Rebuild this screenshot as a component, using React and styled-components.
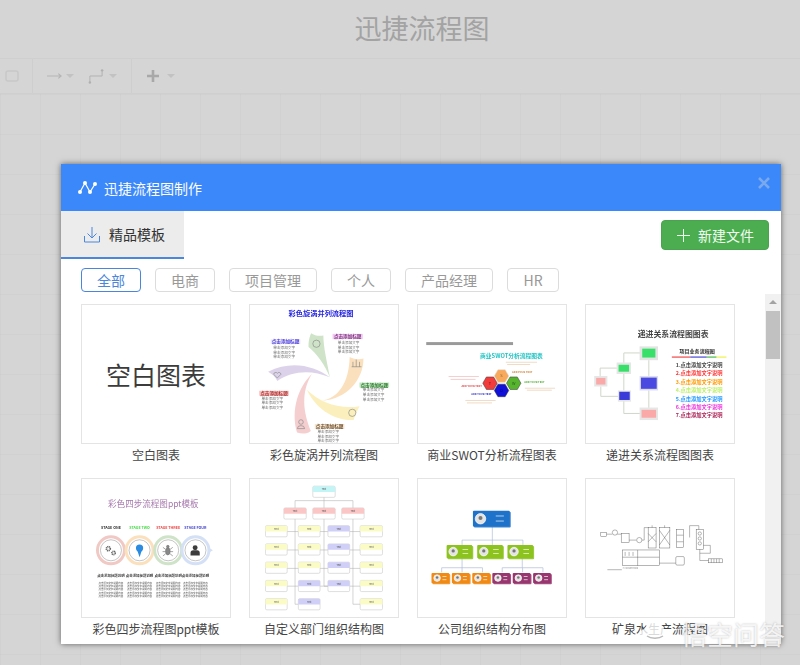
import React from 'react';
import styled, { createGlobalStyle } from 'styled-components';

const GlobalStyle = createGlobalStyle`
  html, body {
    margin: 0;
    padding: 0;
    background: #d5d5d5;
  }
  * {
    box-sizing: border-box;
  }
  body {
    font-family: "Noto Sans CJK SC", "Liberation Sans", sans-serif;
  }
`;

const Page = styled.div`
  position: relative;
  width: 800px;
  height: 665px;
  overflow: hidden;
  background: #d5d5d5;
  display: flex;
  flex-direction: column;
`;

const PageTitle = styled.h1`
  margin: 0;
  height: 58px;
  padding-left: 44px;
  text-align: center;
  font-size: 27px;
  line-height: 56px;
  font-weight: 400;
  color: #a3a3a3;
`;

const Toolbar = styled.div`
  height: 36px;
  display: flex;
  align-items: center;
  padding-left: 5px;
  border-top: 1px solid #cfcfcf;
  border-bottom: 1px solid #cfcfcf;
`;

const ToolGroup = styled.div`
  height: 100%;
  display: flex;
  align-items: center;
  gap: ${(p) => p.$gap || 6}px;
  padding: 0 ${(p) => p.$pad || 0}px;
  width: ${(p) => p.$width}px;
  border-right: ${(p) => (p.$divider ? '1px solid #cecece' : 'none')};
`;

const Caret = styled.span`
  width: 0;
  height: 0;
  border-left: 4px solid transparent;
  border-right: 4px solid transparent;
  border-top: 4px solid #c2c2c2;
`;

const ConnectorIcon = styled.svg`
  margin-left: 10px;
`;

const Canvas = styled.div`
  flex: 1;
  background-color: #d5d5d5;
  background-image:
    linear-gradient(to right, rgba(0, 0, 0, 0.018) 1px, transparent 1px),
    linear-gradient(to bottom, rgba(0, 0, 0, 0.018) 1px, transparent 1px);
  background-size: 40px 40px;
`;

const Modal = styled.section`
  position: absolute;
  left: 61px;
  top: 164px;
  width: 720px;
  height: 480px;
  background: #fff;
  display: flex;
  flex-direction: column;
  box-shadow: 0 0 6px rgba(0, 0, 0, 0.55);
`;

const ModalHeader = styled.header`
  height: 47px;
  flex: none;
  background: #3b88fb;
  display: flex;
  align-items: center;
  gap: 7px;
  padding: 0 10px 0 17px;
  color: #fff;
  font-size: 14px;
`;

const ModalTitle = styled.span`
  flex: 1;
  line-height: 50px;
`;

const CloseButton = styled.span`
  width: 12px;
  height: 12px;
  margin: -10px 1px 0 0;
  display: flex;
`;

const TabRow = styled.div`
  height: 48px;
  flex: none;
  display: flex;
  justify-content: space-between;
  align-items: flex-start;
  padding-right: 12px;
`;

const Tab = styled.div`
  width: 123px;
  height: 48px;
  display: flex;
  align-items: center;
  gap: 9px;
  padding-left: 23px;
  background: #ececec;
  border-bottom: 2px solid #4a86dc;
  font-size: 14px;
  color: #333;
`;

const NewButton = styled.button`
  margin-top: 9px;
  width: 108px;
  height: 30px;
  display: flex;
  align-items: center;
  justify-content: center;
  gap: 8px;
  padding: 0 0 0 1px;
  border: 1px solid #4aa34e;
  border-radius: 4px;
  background: #4cad50;
  color: #f2fff2;
  font-family: inherit;
  font-size: 14px;
`;

const FilterRow = styled.nav`
  height: 35px;
  flex: none;
  display: flex;
  gap: 14px;
  padding: 9px 0 0 20px;
`;

const Chip = styled.span`
  height: 24px;
  width: ${(p) => p.$width}px;
  display: flex;
  align-items: center;
  justify-content: center;
  border-radius: 4px;
  border: 1px solid ${(p) => (p.$active ? '#4a86dc' : '#dcdcdc')};
  color: ${(p) => (p.$active ? '#4a86dc' : '#999')};
  font-size: 14px;
`;

const Body = styled.div`
  flex: 1;
  min-height: 0;
  display: flex;
  overflow: hidden;
`;

const Grid = styled.div`
  flex: 1;
  display: grid;
  grid-template-columns: repeat(4, 150px);
  grid-auto-rows: 174px;
  column-gap: 18px;
  padding: 10px 0 0 20px;
`;

const Card = styled.figure`
  margin: 0;
  display: flex;
  flex-direction: column;
  align-items: center;
`;

const Thumb = styled.div`
  width: 150px;
  height: 140px;
  flex: none;
  border: 1px solid #e4e4e4;
  background: #fff;
  display: flex;
  align-items: center;
  justify-content: center;
  overflow: hidden;

  svg {
    filter: blur(0.35px);
  }
`;

const BlankLabel = styled.span`
  font-size: 25px;
  color: #3c3c3c;
`;

const Caption = styled.figcaption`
  font-size: 12px;
  line-height: 22px;
  color: #444;
  white-space: nowrap;
`;

const Scrollbar = styled.div`
  width: 16px;
  flex: none;
  background: #f1f1f1;
  display: flex;
  flex-direction: column;
  align-items: center;
`;

const ScrollArrow = styled.span`
  margin: 6px 0 7px;
  width: 0;
  height: 0;
  border-left: 4px solid transparent;
  border-right: 4px solid transparent;
  border-bottom: 4px solid #a3a3a3;
`;

const ScrollThumb = styled.div`
  width: 14px;
  height: 48px;
  background: #c1c1c1;
`;

const Watermark = styled.div`
  position: absolute;
  right: 15px;
  bottom: 17px;
  display: flex;
  align-items: center;
  gap: 8px;
  color: rgba(255, 255, 255, 0.82);
  font-size: 26px;
  line-height: 28px;
  text-shadow: 0 0 2px rgba(120, 120, 120, 0.5);
`;

const T = ({ x, y, s = 12, c = '#555', w, a = 'middle', children }) => (
  <text x={x} y={y} fontSize={s} fill={c} fontWeight={w} textAnchor={a} fontFamily='"Noto Sans CJK SC", sans-serif'>
    {children}
  </text>
);

const Lines = ({ x, y, text = '单击添加文字', rows = 3, gap = 14, s = 11, c = '#666' }) => (
  <g>
    {Array.from({ length: rows }, (_, i) => (
      <T key={i} x={x} y={y + i * gap + 6} s={s} c={c} a="start">{text}</T>
    ))}
  </g>
);

const Art = ({ box, children }) => (
  <svg width="150" height="140" viewBox={`${box} 450 420`}>
    {children}
  </svg>
);

const SwirlArt = () => (
  <Art box="27 12">
    <T x={243} y={45} s={22} c="#2525e0" w="700">彩色旋涡并列流程图</T>
    <path d="M270 232C262 190 250 140 250 105C235 108 222 104 213 98C205 115 205 130 205 140C230 160 255 195 270 232Z" fill="#cfe3c9" />
    <path d="M245 303C295 295 328 250 330 170C345 178 360 178 372 175C372 240 320 300 245 303Z" fill="#fbe0bd" />
    <path d="M200 270C240 310 300 330 360 320C352 335 345 350 342 362C280 365 225 325 200 270Z" fill="#fbf0bd" />
    <path d="M215 222C175 260 150 330 170 400C185 405 200 405 212 395C190 340 180 280 215 222Z" fill="#f5cfcf" />
    <path d="M270 232C220 195 150 180 82 215C95 222 105 232 110 243C160 210 215 210 270 232Z" fill="#dcd3ea" />
    <g fill="none" stroke="#888" strokeWidth="2">
      <circle cx="229" cy="130" r="11" />
      <path d="M340 200v-15M350 200v-22M360 200v-15M336 200h30" />
      <circle cx="338" cy="340" r="11" />
      <path d="M110 234l-11-11a6 6 0 0 1 11-3a6 6 0 0 1 11 3z" />
      <circle cx="182" cy="368" r="7" />
      <path d="M171 388a11 9 0 0 1 22 0z" />
    </g>
    <rect x="90" y="117" width="90" height="14" fill="#e8e4fa" />
    <T x={135} y={129} s={14} c="#4a3fd8" w="700">点击添加标题</T>
    <rect x="278" y="100" width="92" height="16" fill="#f3c9f3" />
    <T x={324} y={113} s={14} c="#7a3a7a" w="700">点击添加标题</T>
    <rect x="360" y="248" width="90" height="15" fill="#bfe5bf" />
    <T x={405} y={261} s={14} c="#2c7a2c" w="700">点击添加标题</T>
    <rect x="55" y="273" width="90" height="15" fill="#fbc1c1" />
    <T x={100} y={286} s={14} c="#a83232" w="700">点击添加标题</T>
    <rect x="224" y="374" width="90" height="15" fill="#f5e4cf" />
    <T x={269} y={387} s={14} c="#6b5030" w="700">点击添加标题</T>
    <Lines x={98} y={140} />
    <Lines x={294} y={125} />
    <Lines x={370} y={269} />
    <Lines x={62} y={294} />
    <Lines x={232} y={396} />
  </Art>
);

const hex = (cx, cy, r) =>
  [0, 60, 120, 180, 240, 300]
    .map((d) => `${cx + r * Math.cos((d * Math.PI) / 180)},${cy + r * Math.sin((d * Math.PI) / 180)}`)
    .join(' ');

const SwotArt = () => (
  <Art box="21 12">
    <rect x="46" y="125" width="264" height="9" fill="#9a9a9a" />
    <T x={305} y={172} s={17.5} c="#22c4c4" w="700">商业SWOT分析流程图表</T>
    <polygon points={hex(240, 250, 22)} fill="#f23b3b" stroke="#333" strokeWidth="1.5" />
    <polygon points={hex(275, 228, 22)} fill="#f7a95e" stroke="#ddd" strokeWidth="1.5" />
    <polygon points={hex(312, 250, 22)} fill="#57b52d" stroke="#333" strokeWidth="1.5" />
    <polygon points={hex(275, 272, 22)} fill="#1010d8" stroke="#333" strokeWidth="1.5" />
    <T x={240} y={254} s={12} c="#611">T</T>
    <T x={275} y={232} s={12} c="#863">S</T>
    <T x={312} y={254} s={12} c="#252">W</T>
    <T x={275} y={276} s={12} c="#008">O</T>
    <T x={184} y={261} s={8} c="#d33" w="700">ADD YOUR TEXT</T>
    <T x={338} y={218} s={8} c="#c72" w="700">ADD YOUR TEXT</T>
    <T x={375} y={248} s={8} c="#4a2" w="700">ADD YOUR TEXT</T>
    <T x={214} y={287} s={8} c="#22c" w="700">ADD YOUR TEXT</T>
    <g fill="#e8c9a8">
      <rect x="288" y="185" width="95" height="2" />
      <rect x="292" y="192" width="70" height="2" />
      <rect x="346" y="264" width="92" height="2" />
      <rect x="352" y="270" width="76" height="2" />
      <rect x="165" y="301" width="92" height="2" />
      <rect x="170" y="309" width="76" height="2" />
    </g>
    <g fill="#f0b5b5">
      <rect x="114" y="229" width="92" height="2" />
      <rect x="120" y="237" width="76" height="2" />
    </g>
  </Art>
);

const StepArt = () => {
  const items = [
    ['1.点击添加文字说明', '#444'],
    ['2.点击添加文字说明', '#f33'],
    ['3.点击添加文字说明', '#f90'],
    ['4.点击添加文字说明', '#bdf06a'],
    ['5.点击添加文字说明', '#29f'],
    ['6.点击添加文字说明', '#e3d'],
    ['7.点击添加文字说明', '#a25'],
  ];
  return (
    <Art box="15 12">
      <T x={280} y={111} s={24} c="#444" w="700">递进关系流程图图表</T>
      <g fill="none" stroke="#cfd6c8" strokeWidth="3">
        <path d="M180 158H130V188M110 204H58V228M60 260V290H114M130 222V272M130 302V342H180M206 180V228M206 325V272" />
      </g>
      <rect x="178" y="138" width="56" height="42" fill="#e3e3e3" />
      <rect x="186" y="145" width="40" height="27" fill="#38e06a" />
      <rect x="108" y="187" width="44" height="35" fill="#e6e6e6" />
      <rect x="114" y="194" width="32" height="21" fill="#38e06a" />
      <rect x="40" y="228" width="40" height="32" fill="#e6e6e6" />
      <rect x="46" y="234" width="28" height="20" fill="#fba8a8" />
      <rect x="112" y="272" width="40" height="34" fill="#e6e6e6" />
      <rect x="116" y="276" width="32" height="25" fill="#3a3ad8" />
      <rect x="178" y="228" width="56" height="44" fill="#dcdcf0" />
      <rect x="182" y="233" width="48" height="34" fill="#4a4ae0" />
      <rect x="178" y="324" width="56" height="38" fill="#e6e6e6" />
      <rect x="184" y="331" width="44" height="24" fill="#fba8a8" />
      <T x={353} y={158} s={15.5} c="#333" w="700">项目业务流程图</T>
      <rect x="276" y="169" width="56" height="3" fill="#e22" />
      <rect x="332" y="169" width="50" height="3" fill="#22c" />
      <rect x="382" y="169" width="30" height="3" fill="#2a2" />
      <rect x="412" y="169" width="30" height="3" fill="#ee2" />
      {items.map(([text, color], i) => (
        <T key={text} x={288} y={200 + i * 25.7} s={16} c={color} a="start" w="700">{text}</T>
      ))}
    </Art>
  );
};

const Gears = () => (
  <g fill="none" stroke="#666">
    <circle cx="113" cy="236" r="6" strokeWidth="5" strokeDasharray="3 1.5" />
    <circle cx="129" cy="249" r="5" strokeWidth="5" strokeDasharray="3 1.5" />
  </g>
);

const Bulb = () => (
  <g>
    <circle cx="208" cy="234" r="11" fill="#2a8be0" />
    <path d="M201 241L208 262L215 241Z" fill="#2a8be0" />
  </g>
);

const Bug = () => (
  <g stroke="#777" strokeWidth="2" fill="#888">
    <ellipse cx="294" cy="244" rx="7" ry="11" />
    <circle cx="294" cy="230" r="4" />
    <path d="M287 238L279 232M287 245H278M287 252L279 258M301 238L309 232M301 245H310M301 252L309 258" fill="none" />
  </g>
);

const Figure = () => (
  <g fill="#3c3c3c">
    <circle cx="377" cy="233" r="7.5" />
    <path d="M363 257V249a8 8 0 0 1 8-8H383a8 8 0 0 1 8 8V257Z" />
  </g>
);

const FourStepArt = () => {
  const rings = [
    [121, '#f1c9c4', 'STAGE ONE', '#333', Gears],
    [208, '#fbe0bd', 'STAGE TWO', '#4d4', Bulb],
    [295, '#cfe3c9', 'STAGE THREE', '#e44', Bug],
    [378, '#d3e0f5', 'STAGE FOUR', '#44c', Figure],
  ];
  return (
    <Art box="33 24">
      <T x={250} y={108} s={26} c="#a678ad">彩色四步流程图ppt模板</T>
      {rings.map(([cx, ring, label, lc, Icon]) => (
        <g key={label}>
          <circle cx={cx} cy={241} r={41} fill="none" stroke={ring} strokeWidth="9" />
          <circle cx={cx} cy={241} r={32} fill="#fff" stroke="#888" strokeWidth="1.5" />
          <Icon />
          <T x={cx} y={176} s={11} c={lc} w="700">{label}</T>
          <T x={cx} y={321} s={10.5} c="#444" w="700">点击添加标题说明</T>
          <Lines x={cx - 38} y={337} rows={5} gap={10} s={7.6} c="#555" text="点击添加文字说明内容" />
        </g>
      ))}
      <path d="M420 234L431 241L420 248Z" fill="#d3e0f5" />
    </Art>
  );
};

const OrgBox = ({ x, y, w = 66, c }) => (
  <g>
    <rect x={x} y={y} width={w} height={34} rx={4} fill="#fff" stroke="#bdbdbd" strokeWidth="1.5" />
    <path d={`M${x} ${y + 18}V${y + 4}a4 4 0 0 1 4-4H${x + w - 4}a4 4 0 0 1 4 4V${y + 18}Z`} fill={c} />
    <T x={x + w / 2} y={y + 13} s={7} c="#555">Text</T>
  </g>
);

const OrgArt = () => {
  const leaf = '#fbfbc6';
  const mid = '#cfcff7';
  const cols = [
    [74, [leaf, leaf, leaf, leaf, leaf]],
    [174, [leaf, leaf, leaf, mid, mid]],
    [264, [mid, mid, mid, mid]],
    [362, [leaf, leaf, leaf, leaf, leaf]],
  ];
  return (
    <Art box="27 24">
      <g fill="none" stroke="#a8a8a8" strokeWidth="1.5">
        <path d="M252 78V90M164 112V90H340V112M252 90V112" />
        <path d="M164 145V405H174M252 145V350H264M340 145V405H362" />
        {[184, 240, 296, 350].map((y) => (
          <path key={y} d={`M140 ${y}H174M240 ${y}H264M330 ${y}H362`} />
        ))}
      </g>
      <OrgBox x={218} y={46} w={68} c="#c3f5f7" />
      <OrgBox x={130} y={112} w={68} c="#fbc6c6" />
      <OrgBox x={218} y={112} w={68} c="#fbc6c6" />
      <OrgBox x={306} y={112} w={68} c="#fbc6c6" />
      {cols.map(([x, colors]) =>
        colors.map((c, i) => <OrgBox key={`${x}-${i}`} x={x} y={166 + i * 55.5} w={x === 362 ? 68 : 66} c={c} />)
      )}
    </Art>
  );
};

const Person = ({ x, y, w, h, c, r = 11 }) => (
  <g>
    <rect x={x + 3} y={y + 3} width={w} height={h} rx={3} fill={c} opacity="0.85" />
    <rect x={x} y={y} width={w} height={h} rx={3} fill={c} />
    <circle cx={x + r + 7} cy={y + h / 2} r={r} fill="#e4e4e4" stroke="#fff" strokeWidth="2" />
    <circle cx={x + r + 7} cy={y + h / 2 - 2} r={r / 2.6} fill="#777" />
    <rect x={x + w * 0.62} y={y + h * 0.3} width={w * 0.22} height={2.5} fill="#fff" opacity="0.8" />
    <rect x={x + w * 0.62} y={y + h * 0.62} width={w * 0.22} height={2.5} fill="#fff" opacity="0.8" />
  </g>
);

const CompanyArt = () => (
  <Art box="21 24">
    <g fill="none" stroke="#a9b8d8" strokeWidth="2">
      <path d="M247 170V225M155 225V210H340V225M155 266V308M93 308V294H217V308" />
      <path d="M338 266V294M277 308V294H401V308M339 294V308" />
    </g>
    <Person x={188} y={121} w={112} h={48} c="#1f72c9" r={16} />
    <Person x={108} y={225} w={78} h={40} c="#8cc31f" r={13} />
    <Person x={201} y={225} w={78} h={40} c="#8cc31f" r={13} />
    <Person x={293} y={225} w={78} h={40} c="#8cc31f" r={13} />
    {[62, 124, 186].map((x) => (
      <Person key={x} x={x} y={310} w={54} h={31} c="#f08a14" r={10} />
    ))}
    {[247, 309, 371].map((x) => (
      <Person key={x} x={x} y={310} w={54} h={31} c="#97366f" r={10} />
    ))}
  </Art>
);

const MineralArt = () => (
  <Art box="15 24">
    <g fill="none" stroke="#555" strokeWidth="1.3">
      <rect x="60" y="187" width="18" height="12" />
      <path d="M78 192H95M110 192H122" />
      <circle cx="103" cy="187" r="8" />
      <rect x="122" y="190" width="24" height="28" />
      <path d="M146 210H168M185 210H192V172H204" />
      <circle cx="177" cy="210" r="8" />
      <rect x="204" y="172" width="24" height="62" />
      <path d="M204 190L228 215M228 190L204 215M216 172V165" />
      <rect x="238" y="172" width="32" height="62" />
      <path d="M238 180L270 225M270 180L238 225M254 172V165" />
      <rect x="291" y="178" width="20" height="54" />
      <path d="M291 195H311M291 215H311" />
      <rect x="350" y="178" width="22" height="60" />
      <circle cx="361" cy="190" r="5" />
      <circle cx="361" cy="205" r="5" />
      <circle cx="361" cy="220" r="5" />
      <path d="M330 202V166H358V178M361 238V272H388M372 226H393V250H361" />
      <rect x="388" y="267" width="42" height="12" />
      <path d="M396 267V279M404 267V279M412 267V279M420 267V279" />
      <rect x="126" y="240" width="112" height="48" />
      <path d="M126 262H238M172 240V288M238 280H288M134 246V258M146 246V258M158 246V258" />
      <rect x="288" y="260" width="26" height="26" rx="4" />
      <path d="M80 300H124" />
    </g>
    <T x={150} y={297} s={5} c="#777">CLEAN WATER TANK</T>
  </Art>
);

const templates = [
  { name: '空白图表' },
  { name: '彩色旋涡并列流程图', Art: SwirlArt },
  { name: '商业SWOT分析流程图表', Art: SwotArt },
  { name: '递进关系流程图图表', Art: StepArt },
  { name: '彩色四步流程图ppt模板', Art: FourStepArt },
  { name: '自定义部门组织结构图', Art: OrgArt },
  { name: '公司组织结构分布图', Art: CompanyArt },
  { name: '矿泉水生产流程图', Art: MineralArt },
];

const filters = [
  ['全部', 60],
  ['电商', 60],
  ['项目管理', 88],
  ['个人', 60],
  ['产品经理', 88],
  ['HR', 52],
];

const App = () => (
  <Page>
    <GlobalStyle />
    <PageTitle>迅捷流程图</PageTitle>
    <Toolbar>
      <ToolGroup $width={28} $divider>
        <svg width="14" height="12" viewBox="0 0 14 12">
          <rect x="1" y="1" width="12" height="10" rx="2" fill="none" stroke="#c8c8c8" strokeWidth="1.5" />
        </svg>
      </ToolGroup>
      <ToolGroup $width={99} $divider $pad={14} $gap={4}>
        <svg width="16" height="8" viewBox="0 0 16 8">
          <path d="M0 4H15M12 1.5L15 4L12 6.5" fill="none" stroke="#b5b5b5" strokeWidth="1.2" />
        </svg>
        <Caret />
        <ConnectorIcon width="18" height="18" viewBox="0 0 18 18">
          <path d="M2 16V9H15V3" fill="none" stroke="#b0b0b0" strokeWidth="1" />
          <circle cx="15" cy="3" r="1.3" fill="#b0b0b0" />
          <circle cx="2" cy="16" r="1.3" fill="#b0b0b0" />
        </ConnectorIcon>
        <Caret />
      </ToolGroup>
      <ToolGroup $pad={14} $gap={7}>
        <svg width="14" height="14" viewBox="0 0 14 14">
          <path d="M7 1V13M1 7H13" fill="none" stroke="#a8a8a8" strokeWidth="2.6" />
        </svg>
        <Caret />
      </ToolGroup>
    </Toolbar>
    <Canvas />

    <Modal>
      <ModalHeader>
        <svg width="19" height="15" viewBox="0 0 19 15">
          <path d="M2 12L7 3L12 12L17 4" fill="none" stroke="#fff" strokeWidth="1.2" />
          <circle cx="2" cy="12" r="2" fill="#fff" />
          <circle cx="7" cy="3" r="2" fill="#fff" />
          <circle cx="12" cy="12" r="2" fill="#fff" />
          <circle cx="17" cy="4" r="2" fill="#fff" />
        </svg>
        <ModalTitle>迅捷流程图制作</ModalTitle>
        <CloseButton>
          <svg width="12" height="12" viewBox="0 0 12 12">
            <path d="M1 1L11 11M11 1L1 11" stroke="#7aa9ee" strokeWidth="2.6" />
          </svg>
        </CloseButton>
      </ModalHeader>
      <TabRow>
        <Tab>
          <svg width="16" height="17" viewBox="0 0 16 17">
            <path d="M8 1V12M3.5 7.5L8 12L12.5 7.5M0.5 10V16H15.5V10" fill="none" stroke="#4a86dc" strokeWidth="1" />
          </svg>
          精品模板
        </Tab>
        <NewButton>
          <svg width="13" height="13" viewBox="0 0 13 13">
            <path d="M6.5 0V13M0 6.5H13" stroke="#eaffea" strokeWidth="1" />
          </svg>
          新建文件
        </NewButton>
      </TabRow>
      <FilterRow>
        {filters.map(([label, width], i) => (
          <Chip key={label} $width={width} $active={i === 0}>{label}</Chip>
        ))}
      </FilterRow>
      <Body>
        <Grid>
          {templates.map(({ name, Art: Drawing }) => (
            <Card key={name}>
              <Thumb>{Drawing ? <Drawing /> : <BlankLabel>空白图表</BlankLabel>}</Thumb>
              <Caption>{name}</Caption>
            </Card>
          ))}
        </Grid>
        <Scrollbar>
          <ScrollArrow />
          <ScrollThumb />
        </Scrollbar>
      </Body>
    </Modal>

    <Watermark>
      <svg width="36" height="24" viewBox="0 0 36 24">
        <path d="M9 21a7 7 0 0 1-1-14a10 10 0 0 1 19 0a7 7 0 0 1 0 14Z" fill="rgba(255,255,255,.8)" />
        <path d="M10 14c4 3 12 3 16 0" fill="none" stroke="#bbb" strokeWidth="1.5" />
      </svg>
      悟空问答
    </Watermark>
  </Page>
);

export default App;
